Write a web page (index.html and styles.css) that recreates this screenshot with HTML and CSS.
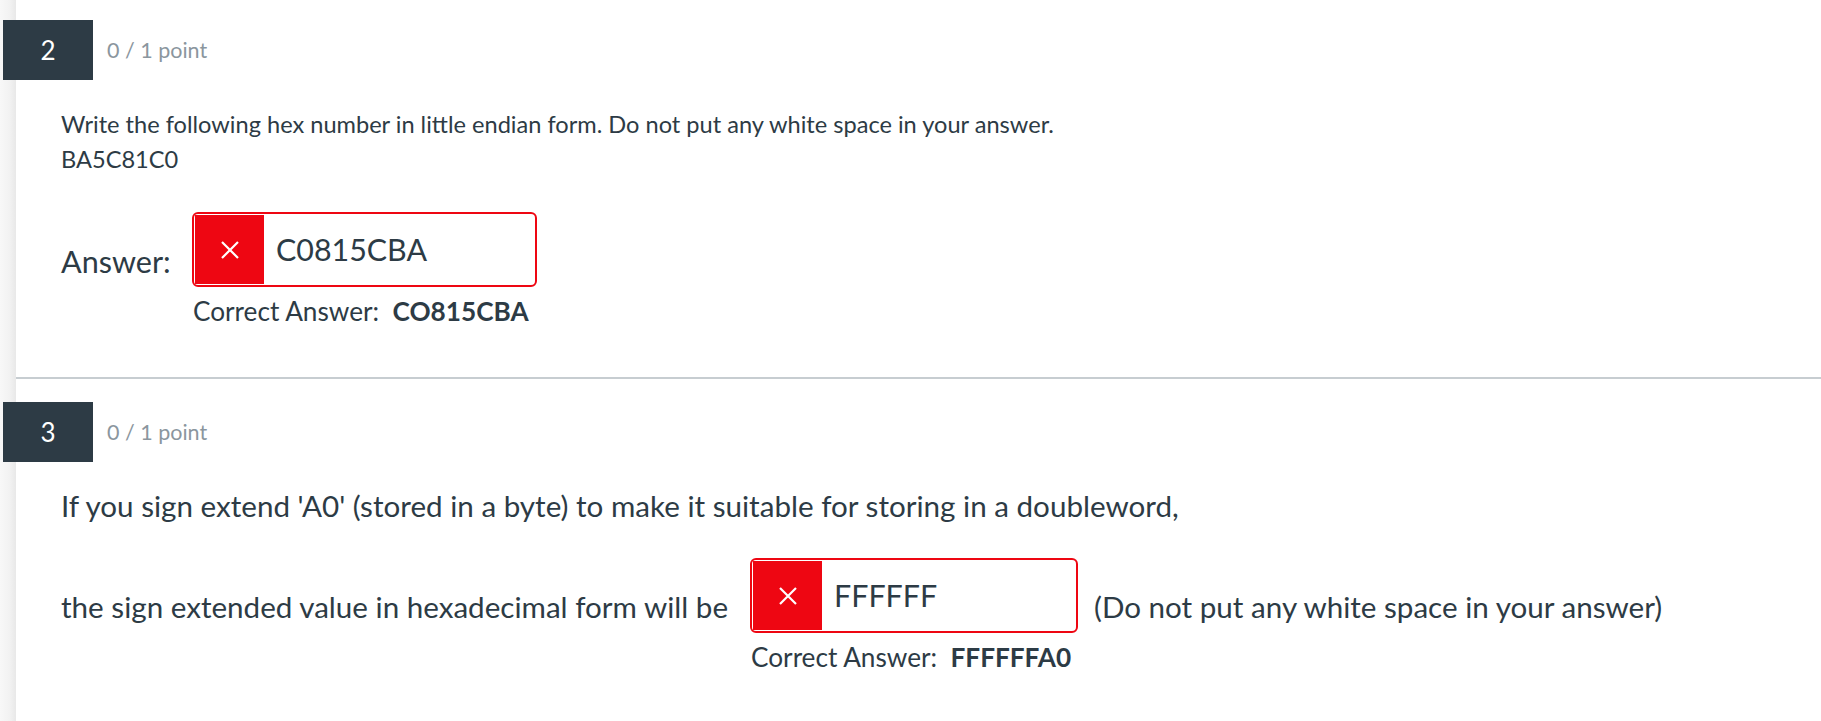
FILE: index.html
```html
<!DOCTYPE html>
<html lang="en">
<head>
<meta charset="utf-8">
<title>Quiz results</title>
<link rel="stylesheet" href="styles.css">
</head>
<body>
<div class="page">
  <div class="rail"></div>
  <main class="main">
    <section class="question q2">
      <header class="qhead">
        <div class="badge">2</div>
        <div class="points">0 / 1 point</div>
      </header>
      <div class="qtext">
        <p>Write the following hex number in little endian form. Do not put any white space in your answer.</p>
        <p>BA5C81C0</p>
      </div>
      <div class="answer-row">
        <div class="answer-label">Answer:</div>
        <div class="answer-col">
          <div class="ans-box wide">
            <div class="ans-icon">
              <svg width="20" height="20" viewBox="0 0 20 20"><path d="M2 2 L18 18 M18 2 L2 18" stroke="#fff" stroke-width="2.2" fill="none"/></svg>
            </div>
            <div class="ans-value">C0815CBA</div>
          </div>
          <div class="correct">Correct Answer:&nbsp; <b>CO815CBA</b></div>
        </div>
      </div>
    </section>
    <section class="question q3">
      <header class="qhead">
        <div class="badge">3</div>
        <div class="points">0 / 1 point</div>
      </header>
      <div class="big-text">
        <p class="line1">If you sign extend 'A0' (stored in a byte) to make it suitable for storing in a doubleword,</p>
        <div class="inline-row">
          <span class="lead">the sign extended value in hexadecimal form will be</span>
          <div class="answer-col">
            <div class="ans-box narrow">
              <div class="ans-icon">
                <svg width="20" height="20" viewBox="0 0 20 20"><path d="M2 2 L18 18 M18 2 L2 18" stroke="#fff" stroke-width="2.2" fill="none"/></svg>
              </div>
              <div class="ans-value">FFFFFF</div>
            </div>
            <div class="correct">Correct Answer:&nbsp; <b>FFFFFFA0</b></div>
          </div>
          <span class="trail">(Do not put any white space in your answer)</span>
        </div>
      </div>
    </section>
  </main>
</div>
</body>
</html>
```
FILE: styles.css
```css
* { box-sizing: border-box; }
html, body { margin: 0; padding: 0; background: #fff; }
body {
  font-family: Lato, "Noto Sans", "Liberation Sans", sans-serif;
  color: #2d3b45;
  height: 721px;
  overflow: hidden;
}
.page { display: flex; min-height: 721px; }
.rail {
  width: 16px;
  flex: none;
  background: linear-gradient(to right, #f8f8f8 0%, #f2f2f2 60%, #e8e8e8 100%);
}
.main { flex: 1; }
.question { padding-left: 45px; }
.q2 { padding-top: 20px; border-bottom: 2px solid #c7cdd1; height: 379px; }
.q3 { padding-top: 23px; }
.qhead { display: flex; align-items: center; margin-left: -58px; }
.badge {
  width: 90px; height: 60px;
  background: #2d3b45; color: #fff;
  display: flex; align-items: center; justify-content: center;
  font-size: 26px;
}
.points { margin-left: 14px; font-size: 21.5px; color: #8b969e; }
.qtext { margin-top: 27px; font-size: 23.6px; line-height: 35px; }
.qtext p { margin: 0; }
.answer-row { display: flex; align-items: flex-start; margin-top: 35px; }
.answer-label { font-size: 30.6px; margin-top: 31px; width: 131px; flex: none; }
.answer-col { display: flex; flex-direction: column; }
.ans-box {
  height: 75px;
  border: 2px solid #ee0612;
  border-radius: 6px;
  padding: 1px;
  display: flex;
  align-items: stretch;
}
.ans-box.wide { width: 345px; }
.ans-box.narrow { width: 328px; }
.ans-icon {
  width: 69px; background: #ee0612;
  display: flex; align-items: center; justify-content: center;
}
.ans-value { font-size: 30.4px; padding-left: 12px; display: flex; align-items: center; padding-bottom: 2px; }
.correct { font-size: 26.2px; margin-top: 8px; padding-left: 1px; }
.correct b { font-weight: 700; }
.big-text { font-size: 29.6px; margin-top: 24px; }
.big-text .line1 { margin: 0; line-height: 40px; }
.inline-row { display: flex; align-items: flex-start; margin-top: 32px; }
.lead { margin-top: 31px; margin-right: 22px; }
.trail { margin-top: 31px; margin-left: 16px; }
```
